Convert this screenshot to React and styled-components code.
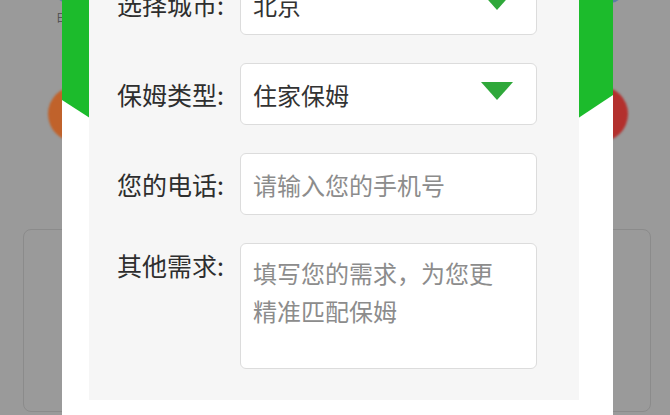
import React from 'react';
import styled, { createGlobalStyle } from 'styled-components';

const GlobalStyle = createGlobalStyle`
  html, body {
    margin: 0;
    padding: 0;
  }
  body {
    font-family: "Noto Sans CJK SC", "Noto Sans", sans-serif;
    background: #9a9a9a;
  }
`;

const Page = styled.div`
  position: relative;
  width: 670px;
  height: 415px;
  overflow: hidden;
  background: #9a9a9a;
`;

// the dimmed page behind the dialog
const Backdrop = styled.div`
  display: flex;
  flex-direction: column;
`;

const IconRow = styled.div`
  display: flex;
  justify-content: space-between;
  padding: 0 48px 0 56px;
  height: 48px;
`;

const IconItem = styled.div`
  display: flex;
  flex-direction: column;
  align-items: ${p => (p.$end ? 'flex-end' : 'flex-start')};
  width: 24px;
`;

const IconDot = styled.div`
  width: 22px;
  height: 22px;
  margin-top: -19px;
  border-radius: 50%;
  background: #5b7fa0;
`;

const IconText = styled.span`
  margin-top: 6px;
  font-size: 11px;
  color: #4a4a4a;
  white-space: nowrap;
`;

const CircleRow = styled.div`
  display: flex;
  justify-content: space-between;
  padding: 38px 42px 0 48px;
`;

const Circle = styled.div`
  width: 56px;
  height: 56px;
  border-radius: 50%;
  background: ${p => p.$color};
  filter: blur(1px);
`;

const Card = styled.div`
  margin: 87px 19px 0 23px;
  height: 181px;
  border: 1px solid #8b8b8b;
  border-radius: 8px;
`;

const Modal = styled.div`
  position: absolute;
  left: 62px;
  top: -120px;
  width: 551px;
  box-sizing: border-box;
  padding: 60px 34px 60px 27px;
  background: #fff;
`;

const GreenBand = styled.div`
  position: absolute;
  left: 0;
  top: 0;
  width: 100%;
  height: 400px;
  background: #1cbb2c;
  clip-path: polygon(0 0, 100% 0, 100% 215px, 50% 398px, 0 220px);
`;

const Panel = styled.div`
  position: relative;
  display: flex;
  flex-direction: column;
  gap: 28px;
  padding: 33px 42px 31px 28px;
  background: #f6f6f6;
`;

const Row = styled.div`
  display: grid;
  grid-template-columns: 113px 297px;
  column-gap: 10px;
  align-items: ${p => (p.$top ? 'start' : 'center')};
`;

const Label = styled.label`
  font-size: 25px;
  line-height: 44px;
  color: #2e2e2e;
  white-space: nowrap;
`;

const Select = styled.div`
  display: flex;
  align-items: center;
  justify-content: space-between;
  height: 62px;
  box-sizing: border-box;
  padding: 0 23px 0 12px;
  background: #fff;
  border: 1px solid #dcdcdc;
  border-radius: 6px;
  font-size: 24px;
  color: #333;
`;

const Input = styled.input`
  height: 62px;
  box-sizing: border-box;
  padding: 0 12px;
  background: #fff;
  border: 1px solid #dcdcdc;
  border-radius: 6px;
  font-family: inherit;
  font-size: 24px;
  color: #333;
  outline: none;

  &::placeholder {
    color: #8c8c8c;
  }
`;

const TextArea = styled.textarea`
  height: 126px;
  box-sizing: border-box;
  padding: 10px 32px 10px 12px;
  background: #fff;
  border: 1px solid #dcdcdc;
  border-radius: 6px;
  font-family: inherit;
  font-size: 24px;
  line-height: 38px;
  color: #333;
  resize: none;
  outline: none;

  &::placeholder {
    color: #8c8c8c;
  }
`;

function Arrow() {
  return (
    <svg width="32" height="18" viewBox="0 0 32 18" style={{ marginTop: -6 }}>
      <polygon points="0,0 32,0 16,18" fill="#2fa83a" />
    </svg>
  );
}

export default function App() {
  return (
    <>
      <GlobalStyle />
      <Page>
        <Backdrop>
          <IconRow>
            <IconItem>
              <IconDot />
              <IconText>日常保洁</IconText>
            </IconItem>
            <IconItem $end>
              <IconDot />
            </IconItem>
          </IconRow>
          <CircleRow>
            <Circle $color="#c0622b" />
            <Circle $color="#b3302d" />
          </CircleRow>
          <Card />
        </Backdrop>

        <Modal>
          <GreenBand />
          <Panel>
            <Row>
              <Label>选择城市:</Label>
              <Select>
                <span>北京</span>
                <Arrow />
              </Select>
            </Row>
            <Row>
              <Label>保姆类型:</Label>
              <Select>
                <span>住家保姆</span>
                <Arrow />
              </Select>
            </Row>
            <Row>
              <Label>您的电话:</Label>
              <Input placeholder="请输入您的手机号" />
            </Row>
            <Row $top>
              <Label>其他需求:</Label>
              <TextArea placeholder="填写您的需求，为您更精准匹配保姆" />
            </Row>
          </Panel>
        </Modal>
      </Page>
    </>
  );
}
